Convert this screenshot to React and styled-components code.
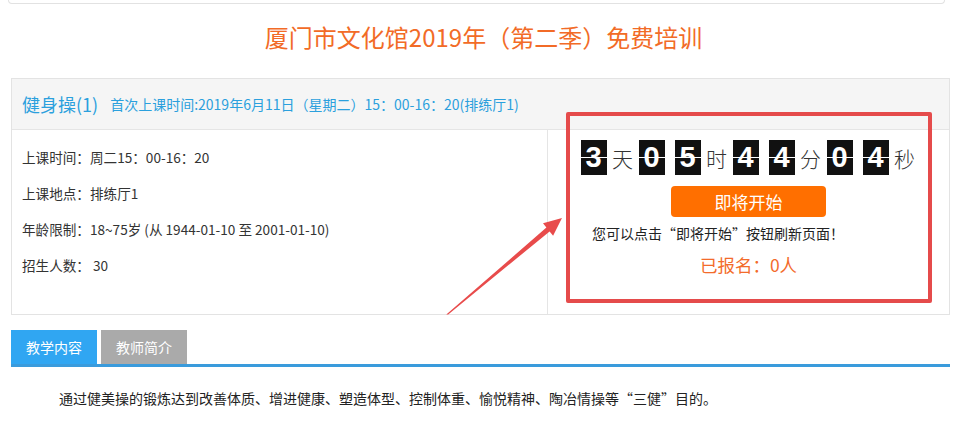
import React from "react";
import styled, { createGlobalStyle } from "styled-components";

const GlobalStyle = createGlobalStyle`
    body{
        margin: 0;
        background: #fff;
        font-family: "Microsoft YaHei", "Noto Sans CJK SC", sans-serif;
        color: #333;
    }
`;

const digitsOf = [
    { type: "d", v: "3" }, { type: "u", v: "天" },
    { type: "d", v: "0" }, { type: "d", v: "5" }, { type: "u", v: "时" },
    { type: "d", v: "4" }, { type: "d", v: "4" }, { type: "u", v: "分" },
    { type: "d", v: "0" }, { type: "d", v: "4" }, { type: "u", v: "秒" },
];

const infoRows = [
    "上课时间：周二15：00-16：20",
    "上课地点：排练厅1",
    "年龄限制：18~75岁 (从 1944-01-10 至 2001-01-10)",
    "招生人数： 30",
];

const App = () => {
    return (
        <Page>
            <GlobalStyle />
            <TopStrip />
            <Main>
                <Title>厦门市文化馆2019年（第二季）免费培训</Title>
                <Card>
                    <CardHeader>
                        <CourseName>健身操(1)</CourseName>
                        <FirstTime>首次上课时间:2019年6月11日（星期二）15：00-16：20(排练厅1)</FirstTime>
                    </CardHeader>
                    <CardBody>
                        <InfoList>
                            {infoRows.map((r) => <InfoRow key={r}>{r}</InfoRow>)}
                        </InfoList>
                        <SignPanel>
                            <Countdown>
                                {digitsOf.map((it, i) =>
                                    it.type === "d"
                                        ? <Digit key={i}>{it.v}</Digit>
                                        : <Unit key={i}>{it.v}</Unit>
                                )}
                            </Countdown>
                            <StartButton>即将开始</StartButton>
                            <Notice>您可以点击“即将开始”按钮刷新页面！</Notice>
                            <Signed>已报名：0人</Signed>
                        </SignPanel>
                    </CardBody>
                </Card>
                <Tabs>
                    <Tab active>教学内容</Tab>
                    <Tab>教师简介</Tab>
                </Tabs>
                <Content>通过健美操的锻炼达到改善体质、增进健康、塑造体型、控制体重、愉悦精神、陶冶情操等“三健”目的。</Content>
            </Main>
            <Highlight />
            <Arrow width="953" height="425" viewBox="0 0 953 425">
                <polygon
                    points="562,218 543,223.3 546.4,227.6 446.3,314.5 448.2,314.5 549.6,231.4 553.1,235.7"
                    fill="#e84b4b"
                />
            </Arrow>
        </Page>
    );
};

const Page = styled.div`
    position: relative;
    width: 953px;
    height: 425px;
    overflow: hidden;
`;

const TopStrip = styled.div`
    height: 3px;
    margin: 0 8px;
    border: 1px solid #e2e2e2;
    border-top: none;
    border-radius: 0 0 4px 4px;
`;

const Main = styled.div`
    padding: 0 3px 0 11px;
`;

const Title = styled.h1`
    margin: 0;
    padding-top: 18px;
    height: 56px;
    font-size: 24px;
    line-height: 30px;
    font-weight: normal;
    text-align: center;
    color: #f26b27;
    padding-left: 6px;
`;

const Card = styled.div`
    border: 1px solid #e3e3e3;
`;

const CardHeader = styled.div`
    display: flex;
    align-items: center;
    height: 50px;
    padding-left: 10px;
    background: #f5f5f5;
    border-bottom: 1px solid #e5e5e5;
    color: #2ba0dd;
`;

const CourseName = styled.span`
    font-size: 18px;
    margin-right: 12px;
`;

const FirstTime = styled.span`
    font-size: 14px;
`;

const CardBody = styled.div`
    display: grid;
    grid-template-columns: 536px 1fr;
    height: 184px;
`;

const InfoList = styled.div`
    padding: 9px 10px 0;
    border-right: 1px solid #e5e5e5;
`;

const InfoRow = styled.div`
    font-size: 13.6px;
    line-height: 36px;
    color: #333;
`;

const SignPanel = styled.div`
    display: flex;
    flex-direction: column;
    align-items: center;
    padding-top: 10px;
`;

const Countdown = styled.div`
    display: flex;
    align-items: center;
    height: 35px;
    margin-left: -6px;
`;

const Digit = styled.span`
    position: relative;
    width: 26px;
    height: 35px;
    margin: 0 5px;
    background: #111;
    color: #fff;
    font-family: "Liberation Sans", Arial, sans-serif;
    font-weight: bold;
    font-size: 29px;
    line-height: 35px;
    text-align: center;
    &::after{
        content: "";
        position: absolute;
        left: -2px;
        right: -2px;
        top: 17px;
        height: 1px;
        background: #fff;
    }
`;

const Unit = styled.span`
    width: 22px;
    font-size: 21px;
    font-weight: 300;
    color: #333;
    text-align: center;
`;

const StartButton = styled.div`
    width: 155px;
    height: 31px;
    margin-top: 11px;
    border-radius: 4px;
    background: #ff6f00;
    color: #fff;
    font-size: 17px;
    line-height: 31px;
    text-align: center;
`;

const Notice = styled.div`
    align-self: flex-start;
    margin: 6px 0 0 44px;
    font-size: 14px;
    line-height: 20px;
    color: #222;
`;

const Signed = styled.div`
    margin-top: 10px;
    font-size: 17.5px;
    line-height: 24px;
    color: #f36b2b;
`;

const Tabs = styled.div`
    display: flex;
    gap: 4px;
    margin-top: 15px;
    border-bottom: 3px solid #3a9bdc;
`;

const Tab = styled.div`
    width: 86px;
    height: 34px;
    line-height: 34px;
    text-align: center;
    font-size: 14px;
    color: #fff;
    background: ${(p) => (p.active ? "#30a6f2" : "#aaaaaa")};
`;

const Content = styled.p`
    margin: 0;
    padding: 22px 0 0 48px;
    font-size: 14px;
    line-height: 18px;
    color: #222;
`;

const Highlight = styled.div`
    position: absolute;
    left: 566px;
    top: 112px;
    width: 358px;
    height: 183px;
    border: 4px solid #e54b4b;
    border-radius: 2px;
    pointer-events: none;
`;

const Arrow = styled.svg`
    position: absolute;
    left: 0;
    top: 0;
    pointer-events: none;
`;

export default App;
